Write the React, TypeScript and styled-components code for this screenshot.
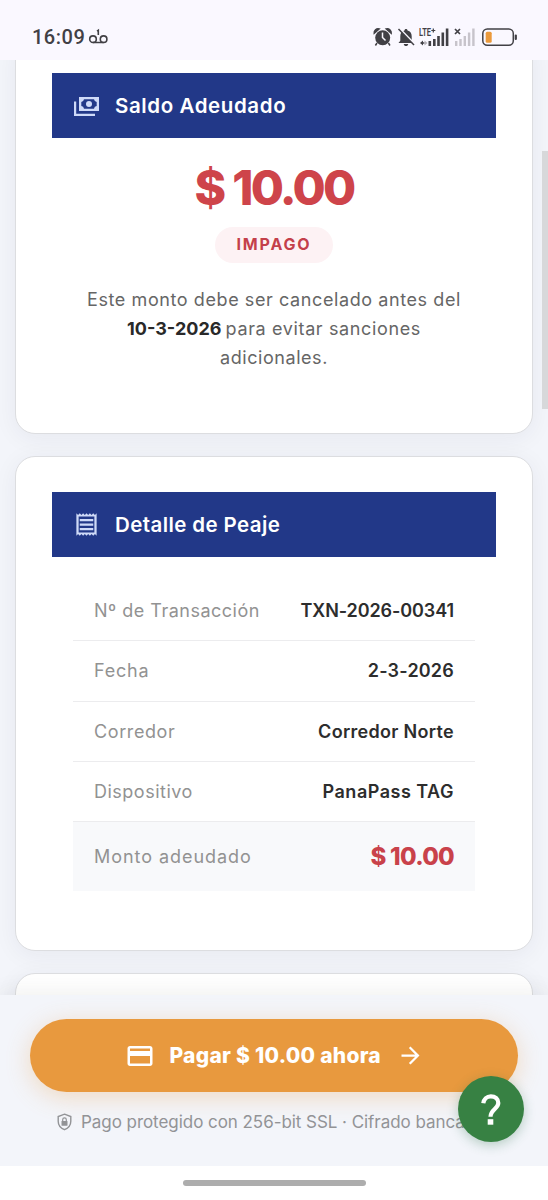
import React from "react";
import styled, { createGlobalStyle } from "styled-components";
import { MdArrowForward, MdOutlineCreditCard, MdOutlineReceipt } from "react-icons/md";

const GlobalStyle = createGlobalStyle`
  * { box-sizing: border-box; }
  body { margin: 0; background: #ffffff; font-family: Inter, "Open Sans", sans-serif; }
`;

const Screen = styled.div`
  position: relative;
  display: flex;
  flex-direction: column;
  width: 548px;
  height: 1200px;
  overflow: hidden;
  background: #f3f5fa;
`;

const StatusBar = styled.header`
  display: flex;
  flex: none;
  align-items: center;
  justify-content: space-between;
  height: 60px;
  padding: 14px 30px 0 32px;
  background: #faf8ff;
  color: #414045;
`;

const StatusGroup = styled.div`
  display: flex;
  align-items: center;
`;

const Clock = styled.span`
  margin-right: 3px;
  font: 500 20px/24px Roboto, sans-serif;
  letter-spacing: 0.5px;
`;

const Content = styled.main`
  display: flex;
  flex: 1;
  flex-direction: column;
  gap: 22px;
  min-height: 0;
  padding: 0 15px;
  overflow: hidden;
`;

const Card = styled.section<{ $height: number; $scrolled?: boolean }>`
  flex: none;
  height: ${(p) => p.$height}px;
  margin-top: ${(p) => (p.$scrolled ? "-23px" : "0")};
  padding: 35px 36px;
  border: 1px solid #dcdde0;
  border-radius: 20px;
  background: #ffffff;
  box-shadow: 0 4px 24px rgba(40, 40, 60, 0.06);
`;

const CardHeader = styled.div`
  display: flex;
  align-items: center;
  gap: 15px;
  height: 65px;
  padding: 0 21px;
  background: #223888;
  color: #cfdaf8;
`;

const CardTitle = styled.h2<{ $spacing: number }>`
  margin: 0;
  color: #ffffff;
  font-size: 20.5px;
  font-weight: 600;
  line-height: 30px;
  letter-spacing: ${(p) => p.$spacing}px;
`;

const Balance = styled.div`
  display: flex;
  flex-direction: column;
  align-items: center;
  padding-top: 22px;
`;

const BalanceAmount = styled.div`
  color: #ce444a;
  font-size: 48px;
  font-weight: 800;
  line-height: 55px;
  letter-spacing: -2.7px;
  word-spacing: 1px;
`;

const StatusBadge = styled.div`
  width: 118px;
  height: 36px;
  margin-top: 12px;
  border-radius: 18px;
  background: #fdf2f4;
  color: #c4404a;
  font-size: 16px;
  font-weight: 700;
  line-height: 35px;
  letter-spacing: 1.8px;
  text-align: center;
`;

const Notice = styled.p`
  margin: 22px 0 0;
  color: #666666;
  font-size: 18px;
  line-height: 29px;
  text-align: center;
`;

const NoticeLine = styled.span<{ $spacing: number }>`
  display: block;
  letter-spacing: ${(p) => p.$spacing}px;
  white-space: nowrap;
`;

const Strong = styled.strong`
  margin-right: -1.5px;
  color: #292929;
  font-weight: 700;
  letter-spacing: 0;
`;

const Details = styled.dl`
  margin: 24px 21px 0;
`;

const DetailRow = styled.div<{ $total?: boolean }>`
  display: flex;
  align-items: center;
  justify-content: space-between;
  height: ${(p) => (p.$total ? 68.5 : 60.25)}px;
  padding: 0 21px;
  border-bottom: ${(p) => (p.$total ? "0" : "1px solid #ececee")};
  background: ${(p) => (p.$total ? "#f8f9fb" : "transparent")};
`;

const Label = styled.dt<{ $spacing: number }>`
  color: #929292;
  font-size: 18px;
  letter-spacing: ${(p) => p.$spacing}px;
`;

const Value = styled.dd<{ $spacing: number }>`
  margin: 0;
  color: #2d2d2d;
  font-size: 18px;
  font-weight: 600;
  letter-spacing: ${(p) => p.$spacing}px;
`;

const Total = styled.dd`
  margin: 0;
  color: #c9424a;
  font-size: 24px;
  font-weight: 800;
  letter-spacing: -0.7px;
`;

const PayPanel = styled.footer`
  flex: none;
  height: 171px;
  padding: 24px 30px 0;
  background: #f3f5fa;
  box-shadow: 0 -4px 20px rgba(60, 60, 40, 0.07);
`;

const PayButton = styled.button`
  display: flex;
  align-items: center;
  width: 100%;
  height: 73px;
  padding: 0 0 0 95px;
  border: 0;
  border-radius: 37px;
  background: #e8993e;
  box-shadow: 0 5px 24px rgba(232, 153, 62, 0.3);
  color: #ffffff;
  font-family: inherit;
`;

const PayLabel = styled.span`
  width: 212px;
  margin: 0 15px 0 14.5px;
  font-size: 21px;
  font-weight: 800;
  letter-spacing: 0.27px;
  text-align: left;
  white-space: nowrap;
`;

const Security = styled.div`
  display: flex;
  align-items: center;
  gap: 8px;
  height: 28px;
  margin-top: 16px;
  padding-left: 26px;
  color: #929396;
  font-size: 17px;
  letter-spacing: -0.05px;
  white-space: nowrap;
`;

const NavigationBar = styled.div`
  display: flex;
  flex: none;
  justify-content: center;
  height: 34px;
  padding-top: 14px;
  background: #ffffff;
`;

const NavigationHandle = styled.div`
  width: 183px;
  height: 6px;
  border-radius: 3px;
  background: #adadad;
`;

const ScrollThumb = styled.div`
  position: absolute;
  top: 151px;
  right: 0;
  width: 6px;
  height: 258px;
  background: #d7d8da;
`;

const HelpButton = styled.button`
  position: absolute;
  top: 1076px;
  left: 458px;
  display: grid;
  place-items: center;
  width: 66px;
  height: 66px;
  padding: 0;
  border: 0;
  border-radius: 50%;
  background: #378143;
  box-shadow: 0 3px 12px rgba(40, 110, 70, 0.3);
  color: #ffffff;
`;

const VoicemailIcon = () => (
  <svg width="21" height="20" viewBox="0 0 21 20" fill="none" stroke="currentColor" strokeWidth="1.6">
    <circle cx="5" cy="12.200" r="3.300" />
    <circle cx="15.600" cy="12.200" r="3.300" />
    <path d="M5 15.500h10.600M9 4.200l1.300-.9v4.600" />
  </svg>
);

const StatusIcons = () => (
  <svg width="146" height="22" viewBox="0 0 146 22">
    <g fill="currentColor">
      <circle cx="10.700" cy="11.700" r="7.500" />
      <path d="M2.200 7.300a4 4 0 0 1 5-4.400zM19.200 7.300a4 4 0 0 0-5-4.400zM5 17l-1.600 2.500M16.400 17l1.600 2.500" stroke="currentColor" strokeWidth="1.500" />
      <path d="M34 3c1 0 1.500.600 1.500 1.500 2.900.800 4.200 2.900 4.200 5.700v4.600l1.700 2.200H26.500l1.800-2.200v-4.600c0-2.800 1.400-4.900 4.200-5.700C32.500 3.600 33 3 34 3zM31.800 18h4.400c0 2.800-4.400 2.800-4.400 0z" />
    </g>
    <path d="M10.500 6.500v5l3 3" fill="none" stroke="#faf8ff" strokeWidth="1.500" />
    <path d="M28 3l15 15.500" stroke="#faf8ff" strokeWidth="1.800" />
    <path d="M26.500 3l15.500 16" stroke="currentColor" strokeWidth="1.500" />
    <text x="47" y="10.200" fill="currentColor" fontFamily="Roboto, sans-serif" fontSize="11" fontWeight="600" textLength="12" lengthAdjust="spacingAndGlyphs">LTE</text>
    <path d="M59.300 4.500h4M61.300 2.500v4" stroke="currentColor" strokeWidth="1.200" />
    <path d="M48 17l3-2.500v1.700h1.500v1.600H51v1.700z" fill="currentColor" />
    <path d="M52.500 14.500l3 2.500-3 2.500z" fill="#b3b0b7" />
    <g fill="currentColor">
      <rect x="56.500" y="15" width="2.600" height="5" />
      <rect x="61" y="13" width="2.600" height="7" />
      <rect x="65.200" y="10" width="2.600" height="10" />
      <rect x="69.500" y="6.500" width="2.600" height="13.500" />
      <rect x="73.800" y="2.500" width="2.600" height="17.500" />
    </g>
    <path d="M83 3l5 5M88 3l-5 5" stroke="currentColor" strokeWidth="1.700" />
    <g fill="#c7c4cb">
      <rect x="83" y="15" width="2.400" height="5" />
      <rect x="87.300" y="13" width="2.400" height="7" />
      <rect x="91.600" y="10" width="2.400" height="10" />
      <rect x="95.900" y="6.500" width="2.400" height="13.500" />
      <rect x="100.200" y="2.500" width="2.400" height="17.500" />
    </g>
    <rect x="110.800" y="3" width="30.500" height="16.300" rx="4.500" fill="none" stroke="currentColor" strokeWidth="1.500" />
    <rect x="113.700" y="5.700" width="6" height="11" rx="1.500" fill="#eb9a3b" />
    <rect x="142.700" y="8.500" width="2.200" height="5.500" rx="1" fill="currentColor" />
  </svg>
);

const PaymentsIcon = () => (
  <svg width="27" height="22" viewBox="0 0 27 22" fill="currentColor">
    <path d="M1 6.500h2.200v12.200H22V21H1z" />
    <path fillRule="evenodd" d="M6 2h20v14H6zM11 4.300a3 3 0 0 1-2.700 2.600v4.200a3 3 0 0 1 2.700 2.600h10a3 3 0 0 1 2.700-2.600V6.900A3 3 0 0 1 21 4.300z" />
    <circle cx="16" cy="9" r="3" />
  </svg>
);

const ShieldLockIcon = () => (
  <svg width="17" height="18" viewBox="0 0 17 18">
    <path d="M8.500 1.200l6.300 2.300v4.700c0 4-2.400 6.800-6.300 8.500-3.900-1.700-6.300-4.500-6.300-8.500V3.500z" fill="none" stroke="currentColor" strokeWidth="1.400" />
    <rect x="5.500" y="8" width="6" height="4.800" rx=".6" fill="currentColor" />
    <path d="M6.700 8V6.700a1.800 1.800 0 0 1 3.600 0V8" fill="none" stroke="currentColor" strokeWidth="1.200" />
  </svg>
);

const QuestionIcon = () => (
  <svg width="20" height="31" viewBox="0 0 20 31">
    <path d="M2.300 9.300C2.800 5.200 5.800 2.300 9.800 2.300c4.400 0 7.500 2.800 7.500 6.700 0 5.600-7.800 6.600-7.800 13.700" fill="none" stroke="currentColor" strokeWidth="4.200" />
    <rect x="6.700" y="25.200" width="5.600" height="5.500" fill="currentColor" />
  </svg>
);

const details = [
  { label: "Nº de Transacción", value: "TXN-2026-00341", labelSpacing: 0.5, valueSpacing: -0.1 },
  { label: "Fecha", value: "2-3-2026", labelSpacing: 0.8, valueSpacing: 0.2 },
  { label: "Corredor", value: "Corredor Norte", labelSpacing: 0.6, valueSpacing: 0.3 },
  { label: "Dispositivo", value: "PanaPass TAG", labelSpacing: 0.5, valueSpacing: 0.5 },
];

export default function App() {
  return (
    <>
      <GlobalStyle />
      <Screen>
        <StatusBar>
          <StatusGroup>
            <Clock>16:09</Clock>
            <VoicemailIcon />
          </StatusGroup>
          <StatusIcons />
        </StatusBar>
        <Content>
          <Card $height={397} $scrolled>
            <CardHeader>
              <PaymentsIcon />
              <CardTitle $spacing={0.6}>Saldo Adeudado</CardTitle>
            </CardHeader>
            <Balance>
              <BalanceAmount>$ 10.00</BalanceAmount>
              <StatusBadge>IMPAGO</StatusBadge>
              <Notice>
                <NoticeLine $spacing={0.59}>Este monto debe ser cancelado antes del</NoticeLine>
                <NoticeLine $spacing={0.63}>
                  <Strong>10-3-2026</Strong> para evitar sanciones
                </NoticeLine>
                <NoticeLine $spacing={0.55}>adicionales.</NoticeLine>
              </Notice>
            </Balance>
          </Card>
          <Card $height={495}>
            <CardHeader>
              <MdOutlineReceipt size={27} />
              <CardTitle $spacing={0.4}>Detalle de Peaje</CardTitle>
            </CardHeader>
            <Details>
              {details.map((d) => (
                <DetailRow key={d.label}>
                  <Label $spacing={d.labelSpacing}>{d.label}</Label>
                  <Value $spacing={d.valueSpacing}>{d.value}</Value>
                </DetailRow>
              ))}
              <DetailRow $total>
                <Label $spacing={0.95}>Monto adeudado</Label>
                <Total>$ 10.00</Total>
              </DetailRow>
            </Details>
          </Card>
          <Card $height={300} />
        </Content>
        <PayPanel>
          <PayButton>
            <MdOutlineCreditCard size={30} />
            <PayLabel>Pagar $ 10.00 ahora</PayLabel>
            <MdArrowForward size={27} />
          </PayButton>
          <Security>
            <ShieldLockIcon />
            <span>Pago protegido con 256-bit SSL · Cifrado bancario</span>
          </Security>
        </PayPanel>
        <NavigationBar>
          <NavigationHandle />
        </NavigationBar>
        <ScrollThumb />
        <HelpButton aria-label="Ayuda">
          <QuestionIcon />
        </HelpButton>
      </Screen>
    </>
  );
}
